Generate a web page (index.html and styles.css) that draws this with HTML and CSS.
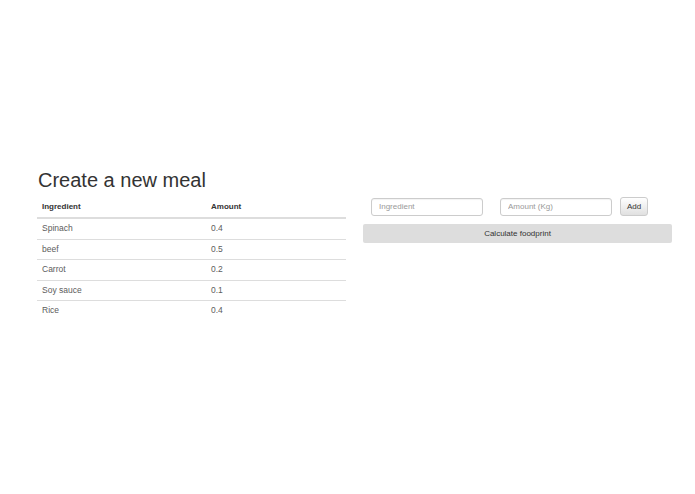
FILE: index.html
```html
<!DOCTYPE html>
<html>
<head>
<meta charset="utf-8">
<link rel="stylesheet" href="styles.css">
</head>
<body>
<div class="page">
  <div class="left">
    <h2 class="title">Create a new meal</h2>
    <table class="meal-table">
      <thead>
        <tr><th class="col-ing">Ingredient</th><th>Amount</th></tr>
      </thead>
      <tbody>
        <tr><td>Spinach</td><td>0.4</td></tr>
        <tr><td>beef</td><td>0.5</td></tr>
        <tr><td>Carrot</td><td>0.2</td></tr>
        <tr><td>Soy sauce</td><td>0.1</td></tr>
        <tr><td>Rice</td><td>0.4</td></tr>
      </tbody>
    </table>
  </div>
  <div class="right">
    <div class="add-row">
      <input class="field" type="text" placeholder="Ingredient">
      <input class="field field-amount" type="text" placeholder="Amount (Kg)">
      <button class="btn-add">Add</button>
    </div>
    <button class="btn-calc">Calculate foodprint</button>
  </div>
</div>
</body>
</html>
```
FILE: styles.css
```css
* { box-sizing: border-box; }
html, body { margin: 0; padding: 0; background: #fff; }
body {
  font-family: "Liberation Sans", Arial, sans-serif;
  color: #333;
  font-size: 9px;
}
.page {
  display: flex;
  padding: 168px 0 0 37px;
  gap: 17px;
}
.left { width: 309px; }
.right { width: 309px; padding-top: 29px; }
.title {
  margin: 0 0 5px 1px;
  font-size: 20px;
  line-height: 24px;
  font-weight: normal;
  color: #333;
}
.meal-table {
  width: 100%;
  border-collapse: collapse;
}
.meal-table th {
  text-align: left;
  font-weight: bold;
  color: #333;
  padding: 5px 5px 5px 5px;
  line-height: 10px;
  border-bottom: 2px solid #ddd;
  font-size: 8px;
}
.meal-table .col-ing { width: 169px; }
.meal-table td {
  padding: 5px 5px;
  line-height: 9.5px;
  border-top: 1px solid #ddd;
  color: #5c5c5c;
  font-size: 8.5px;
}
.meal-table tbody tr:first-child td { border-top: none; }
.add-row {
  display: flex;
  align-items: center;
  padding-left: 8px;
  height: 19px;
}
.field {
  width: 112px;
  height: 18px;
  border: 1px solid #ccc;
  border-radius: 3px;
  padding: 0 7px;
  font-family: "Liberation Sans", Arial, sans-serif;
  font-size: 8px;
  color: #555;
  box-shadow: inset 0 1px 1px rgba(0,0,0,0.05);
}
.field::placeholder { color: #999; }
.field-amount { margin-left: 17px; }
.btn-add {
  margin-left: 8px;
  width: 28px;
  height: 19px;
  padding: 0;
  border: 1px solid #ccc;
  border-radius: 3px;
  background: linear-gradient(#fff, #e0e0e0);
  font-family: "Liberation Sans", Arial, sans-serif;
  font-size: 8px;
  color: #333;
}
.btn-calc {
  display: block;
  width: 100%;
  margin-top: 8px;
  height: 19px;
  border: none;
  border-radius: 2px;
  background: #dddddd;
  font-family: "Liberation Sans", Arial, sans-serif;
  font-size: 8px;
  color: #333;
  padding: 0;
}
```
